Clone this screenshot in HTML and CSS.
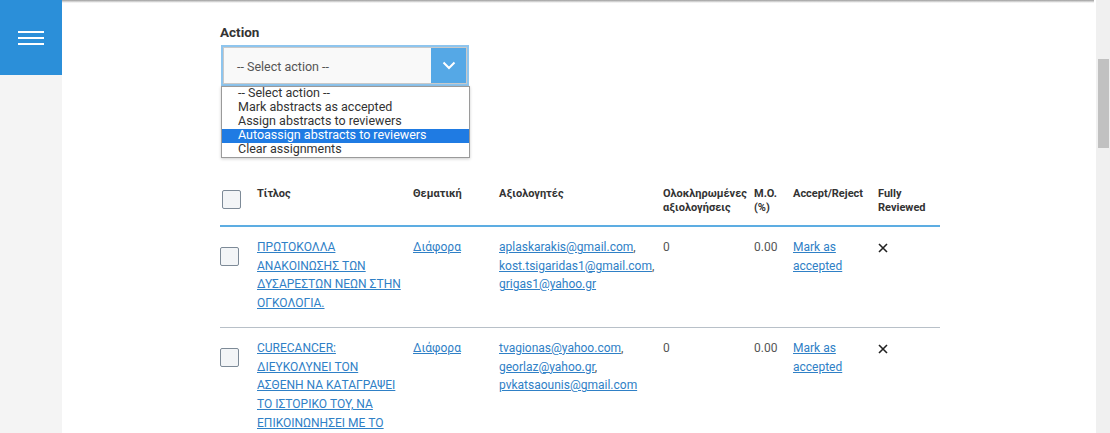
FILE: index.html
```html
<!DOCTYPE html>
<html lang="el">
<head>
    <meta charset="UTF-8">
    <meta name="viewport" content="width=device-width, initial-scale=1.0">
    <title>Abstracts</title>
    <link rel="stylesheet" href="styles.css">
</head>
<body>
    <!-- Πλευρική μπάρα -->
    <div class="sidebar">
        <div class="menu-button">
            <span></span><span></span><span></span>
        </div>
    </div>

    <div class="main">
        <div class="header-edge"></div>
        <div class="content">
            <div class="action-label">Action</div>
            <div class="select-wrap">
                <div class="select-box">
                    <div class="select-value">-- Select action --</div>
                    <div class="select-arrow">
                        <svg width="14" height="9" viewBox="0 0 14 9"><path d="M1.5 1.5 L7 7 L12.5 1.5" fill="none" stroke="#fff" stroke-width="2"/></svg>
                    </div>
                </div>
                <!-- Λίστα επιλογών (ανοιχτή) -->
                <ul class="select-options">
                    <li>-- Select action --</li>
                    <li>Mark abstracts as accepted</li>
                    <li>Assign abstracts to reviewers</li>
                    <li class="selected">Autoassign abstracts to reviewers</li>
                    <li>Clear assignments</li>
                </ul>
            </div>

            <table class="abstracts">
                <colgroup>
                    <col style="width: 37px">
                    <col style="width: 156px">
                    <col style="width: 86px">
                    <col style="width: 164px">
                    <col style="width: 91px">
                    <col style="width: 39px">
                    <col style="width: 85px">
                    <col style="width: 62px">
                </colgroup>
                <thead>
                    <tr>
                        <th><span class="checkbox head-check"></span></th>
                        <th>Τίτλος</th>
                        <th>Θεματική</th>
                        <th>Αξιολογητές</th>
                        <th>Ολοκληρωμένες αξιολογήσεις</th>
                        <th>M.O. (%)</th>
                        <th>Accept/Reject</th>
                        <th>Fully Reviewed</th>
                    </tr>
                </thead>
                <tbody>
                    <tr>
                        <td><span class="checkbox"></span></td>
                        <td class="title"><a href="#">ΠΡΩΤΟΚΟΛΛΑ ΑΝΑΚΟΙΝΩΣΗΣ ΤΩΝ ΔΥΣΑΡΕΣΤΩΝ ΝΕΩΝ ΣΤΗΝ ΟΓΚΟΛΟΓΙΑ.</a></td>
                        <td><a href="#">Διάφορα</a></td>
                        <td><a href="#">aplaskarakis@gmail.com</a>, <a href="#">kost.tsigaridas1@gmail.com</a>, <a href="#">grigas1@yahoo.gr</a></td>
                        <td>0</td>
                        <td>0.00</td>
                        <td><a href="#">Mark as accepted</a></td>
                        <td class="cross">
                            <svg width="10" height="10" viewBox="0 0 10 10"><path d="M1 1 L9 9 M9 1 L1 9" stroke="#222" stroke-width="1.6"/></svg>
                        </td>
                    </tr>
                    <tr>
                        <td><span class="checkbox"></span></td>
                        <td class="title"><a href="#">CURECANCER: ΔΙΕΥΚΟΛΥΝΕΙ ΤΟΝ ΑΣΘΕΝΗ ΝΑ ΚΑΤΑΓΡΑΨΕΙ ΤΟ ΙΣΤΟΡΙΚΟ ΤΟΥ, ΝΑ ΕΠΙΚΟΙΝΩΝΗΣΕΙ ΜΕ ΤΟ ΓΙΑΤΡΟ ΤΟΥ</a></td>
                        <td><a href="#">Διάφορα</a></td>
                        <td><a href="#">tvagionas@yahoo.com</a>, <a href="#">georlaz@yahoo.gr</a>, <a href="#">pvkatsaounis@gmail.com</a></td>
                        <td>0</td>
                        <td>0.00</td>
                        <td><a href="#">Mark as accepted</a></td>
                        <td class="cross">
                            <svg width="10" height="10" viewBox="0 0 10 10"><path d="M1 1 L9 9 M9 1 L1 9" stroke="#222" stroke-width="1.6"/></svg>
                        </td>
                    </tr>
                </tbody>
            </table>
        </div>
    </div>

    <div class="scrollbar">
        <div class="scroll-thumb"></div>
    </div>
</body>
</html>
```

FILE: styles.css
```css
body {
    font-family: Roboto, "Noto Sans", sans-serif;
    margin: 0;
    height: 433px;
    overflow: hidden;
    display: flex;
    background-color: #ffffff;
    color: #555555;
}
.sidebar {
    width: 62px;
    flex: 0 0 62px;
    background-color: #f4f4f4;
}
.menu-button {
    height: 75px;
    background-color: #2b8fd9;
    display: flex;
    flex-direction: column;
    justify-content: center;
    align-items: center;
    gap: 4px;
}
.menu-button span {
    display: block;
    width: 26px;
    height: 2px;
    background-color: #ffffff;
}
.main {
    flex: 1 1 auto;
    min-width: 0;
}
.header-edge {
    height: 3px;
    background: linear-gradient(#9c9c9c, #dcdcdc 60%, #ffffff);
    margin-right: 2px;
}
.content {
    padding: 21px 0 0 158px;
}
.action-label {
    font-size: 13.5px;
    font-weight: 700;
    color: #333333;
    line-height: 16px;
    margin-bottom: 7px;
}
.select-wrap {
    position: relative;
    width: 250px;
}
.select-box {
    display: flex;
    height: 35px;
    border: 1px solid #c9c9c9;
    box-shadow: 0 0 0 2px #8ec5ee;
    margin: 2px 3px 2px 3px;
    background-color: #f9f9f9;
}
.select-value {
    flex: 1 1 auto;
    font-size: 12.5px;
    line-height: 37px;
    padding-left: 13px;
    color: #555555;
}
.select-arrow {
    width: 35px;
    background-color: #55a8e6;
    display: flex;
    align-items: center;
    justify-content: center;
}
/* liste déroulante ouverte */
.select-options {
    position: absolute;
    top: 39px;
    left: 1px;
    width: 247px;
    margin: 0;
    padding: 0;
    list-style: none;
    background-color: #ffffff;
    border: 1px solid #9a9a9a;
    box-shadow: 0 1px 3px rgba(0,0,0,0.2);
    z-index: 2;
}
.select-options li {
    font-size: 12.5px;
    line-height: 11px;
    height: 14px;
    padding-left: 16px;
    color: #333333;
}
.select-options li.selected {
    background-color: #1f7be3;
    color: #ffffff;
}
.abstracts {
    margin-top: 98px;
    border-collapse: collapse;
    table-layout: fixed;
    width: 720px;
    font-size: 12px;
}
.abstracts th {
    text-align: left;
    vertical-align: top;
    font-size: 11px;
    font-weight: 700;
    color: #333333;
    line-height: 14px;
    padding: 5px 6px 10px 0;
    border-bottom: 2px solid #5dade2;
}
.abstracts td {
    vertical-align: top;
    line-height: 18.7px;
    padding: 11px 8px 14px 0;
    border-bottom: 1px solid #b8c0c8;
    color: #555555;
}
.abstracts td.title {
    padding-right: 9px;
}
.abstracts a {
    color: #2f80c6;
    text-decoration: underline;
}
.checkbox {
    display: block;
    width: 17px;
    height: 17px;
    border: 1px solid #7d8a97;
    border-radius: 2px;
    background-color: #f3f5f7;
}
.abstracts td .checkbox {
    margin-top: 9px;
}
.head-check {
    margin-left: 2px;
    margin-top: 3px;
}
.abstracts td.cross svg {
    display: block;
    margin-top: 5px;
}
.scrollbar {
    width: 14px;
    flex: 0 0 14px;
    background-color: #f0f0f0;
}
.scroll-thumb {
    margin: 59px 1px 0 2px;
    height: 89px;
    background-color: #c1c1c1;
}
```
